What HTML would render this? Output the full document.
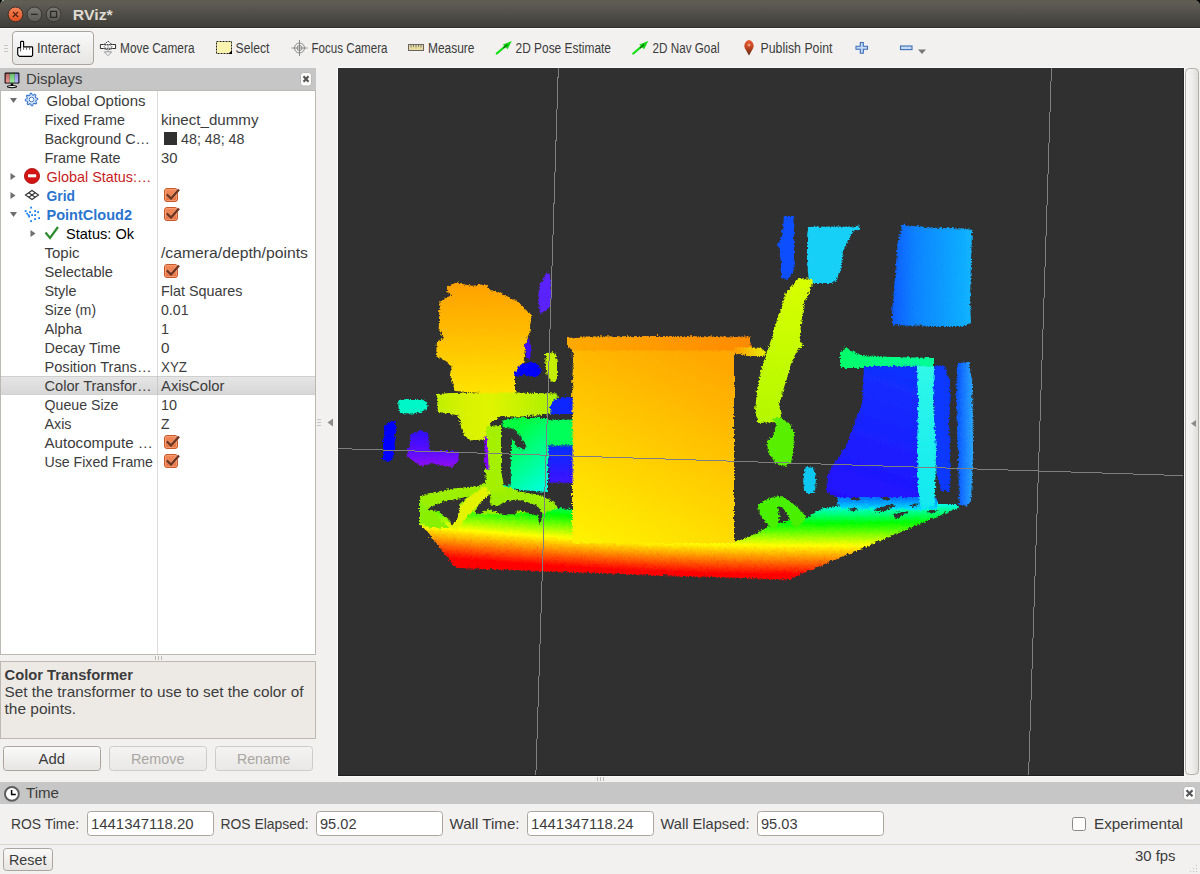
<!DOCTYPE html><html><head><meta charset="utf-8"><style>html,body{margin:0;padding:0;background:#f2f1f0;overflow:hidden}svg{display:block}text{font-family:"Liberation Sans",sans-serif;white-space:pre}</style></head><body>
<svg width="1200" height="874" viewBox="0 0 1200 874">
<defs>
<linearGradient id="tb" x1="0" y1="0" x2="0" y2="1"><stop offset="0" stop-color="#5b5950"/><stop offset="0.06" stop-color="#605e55"/><stop offset="1" stop-color="#3d3c38"/></linearGradient>
<linearGradient id="btn" x1="0" y1="0" x2="0" y2="1"><stop offset="0" stop-color="#fafafa"/><stop offset="1" stop-color="#e6e5e3"/></linearGradient>
<linearGradient id="btnd" x1="0" y1="0" x2="0" y2="1"><stop offset="0" stop-color="#f4f3f2"/><stop offset="1" stop-color="#e9e8e6"/></linearGradient>
<linearGradient id="cls" x1="0" y1="0" x2="0" y2="1"><stop offset="0" stop-color="#f6855a"/><stop offset="1" stop-color="#e0501e"/></linearGradient>
<linearGradient id="gbtn" x1="0" y1="0" x2="0" y2="1"><stop offset="0" stop-color="#7d7b74"/><stop offset="1" stop-color="#5a5953"/></linearGradient>
<linearGradient id="sel" x1="0" y1="0" x2="0" y2="1"><stop offset="0" stop-color="#e6e6e6"/><stop offset="1" stop-color="#d6d6d6"/></linearGradient>
<linearGradient id="chk" x1="0" y1="0" x2="0" y2="1"><stop offset="0" stop-color="#f38b5c"/><stop offset="1" stop-color="#e8703c"/></linearGradient>
<linearGradient id="vsplit" x1="0" y1="0" x2="1" y2="0"><stop offset="0" stop-color="#f6f5f4"/><stop offset="0.5" stop-color="#efeeed"/><stop offset="1" stop-color="#dddbd8"/></linearGradient>
<linearGradient id="mr" x1="0" y1="0" x2="0" y2="1"><stop offset="0" stop-color="#b86868"/><stop offset="1" stop-color="#f09898"/></linearGradient>
<linearGradient id="mg" x1="0" y1="0" x2="0" y2="1"><stop offset="0" stop-color="#6cba6c"/><stop offset="1" stop-color="#9aeaa0"/></linearGradient>
<linearGradient id="mb" x1="0" y1="0" x2="0" y2="1"><stop offset="0" stop-color="#8888d8"/><stop offset="1" stop-color="#b8b8ff"/></linearGradient>
<linearGradient id="pin" x1="0" y1="0" x2="0" y2="1"><stop offset="0" stop-color="#e85a30"/><stop offset="0.5" stop-color="#c04420"/><stop offset="1" stop-color="#5a2812"/></linearGradient>
</defs>
<rect x="0" y="0" width="1200" height="28" fill="url(#tb)"/>
<rect x="0" y="27" width="1200" height="1" fill="#2e2d29"/>
<path d="M0 0 H2.5 Q0.6 0.8 0 4 Z" fill="#000"/><path d="M1200 0 H1196 Q1199.2 1 1200 4 Z" fill="#000"/>
<rect x="2" y="0" width="2" height="1" fill="#a8d8e0" opacity="0.6"/>
<rect x="0" y="28" width="1200" height="1" fill="#fbfbfb"/>
<circle cx="15.5" cy="14.4" r="7.4" fill="url(#cls)" stroke="#3b2f28" stroke-width="1"/>
<path d="M12.9 11.8 L18.1 17 M18.1 11.8 L12.9 17" stroke="#4a1e10" stroke-width="1.1"/>
<circle cx="34.4" cy="14.4" r="7.4" fill="url(#gbtn)" stroke="#36352f" stroke-width="1"/>
<rect x="31" y="13.7" width="6.8" height="1.3" fill="#2c2b27"/>
<circle cx="53.6" cy="14.4" r="7.4" fill="url(#gbtn)" stroke="#36352f" stroke-width="1"/>
<rect x="50.6" y="11.4" width="6" height="6" fill="none" stroke="#2c2b27" stroke-width="1.3"/>
<text x="72.8" y="20.4" font-size="15" fill="#dfdbd2" font-weight="bold" textLength="40" lengthAdjust="spacingAndGlyphs">RViz*</text>
<rect x="0" y="29" width="1200" height="39" fill="#f2f1f0"/>
<rect x="4" y="45" width="4" height="1" fill="#c9c6c1"/>
<rect x="4" y="48" width="4" height="1" fill="#c9c6c1"/>
<rect x="4" y="51" width="4" height="1" fill="#c9c6c1"/>
<rect x="12.5" y="31.5" width="81" height="33" rx="3.5" fill="url(#btn)" stroke="#aaa59f" stroke-width="1"/>
<path d="M20.6 42.2 Q20.6 41.4 21.4 41.4 L22.8 41.4 Q23.6 41.4 23.6 42.2 L23.6 46.8 L31.9 46.8 Q32.6 46.8 32.6 47.5 L32.6 55.4 L31.6 56.4 L19.4 56.4 L17.7 54.7 L17.7 48.4 Q17.7 47.6 18.5 47.6 L20.6 47.6 Z" fill="#fff" stroke="#000" stroke-width="1.15" stroke-linejoin="round"/>
<path d="M20.6 48 V51.6 M23.6 47.2 V49.8 M26.6 47.2 V49.8 M29.6 47.2 V49.8" stroke="#333" stroke-width="0.8"/>
<text x="37" y="53" font-size="14" fill="#3c3c3c" textLength="43" lengthAdjust="spacingAndGlyphs">Interact</text>
<text x="120" y="53" font-size="14" fill="#3c3c3c" textLength="74.5" lengthAdjust="spacingAndGlyphs">Move Camera</text>
<text x="235.5" y="53" font-size="14" fill="#3c3c3c" textLength="34" lengthAdjust="spacingAndGlyphs">Select</text>
<text x="311.5" y="53" font-size="14" fill="#3c3c3c" textLength="76" lengthAdjust="spacingAndGlyphs">Focus Camera</text>
<text x="428" y="53" font-size="14" fill="#3c3c3c" textLength="46.5" lengthAdjust="spacingAndGlyphs">Measure</text>
<text x="652.5" y="53" font-size="14" fill="#3c3c3c" textLength="67" lengthAdjust="spacingAndGlyphs">2D Nav Goal</text>
<text x="760.5" y="53" font-size="14" fill="#3c3c3c" textLength="72" lengthAdjust="spacingAndGlyphs">Publish Point</text>
<text x="515.5" y="53" font-size="14" fill="#3c3c3c" textLength="95.5" lengthAdjust="spacingAndGlyphs">2D Pose Estimate</text>
<path d="M100.4 44.5 L103.6 44.5 Q108 42.6 112.4 44.5 L115.6 44.5 L115.6 48.5 L112.4 48.5 Q108 50.6 103.6 48.5 L100.4 48.5 Z" fill="#fff" stroke="#222" stroke-width="0.95"/>
<rect x="107.2" y="44" width="1.6" height="8.5" fill="#bdbdbd"/>
<ellipse cx="108" cy="46.6" rx="3.9" ry="1.9" fill="none" stroke="#333" stroke-width="0.9" stroke-dasharray="1.3 0.9"/>
<path d="M108 41.2 L111.9 44.6 L104.1 44.6 Z" fill="#fff" stroke="#222" stroke-width="0.9" stroke-dasharray="1.4 0.8"/>
<path d="M108 55.6 L104.4 51.9 L111.6 51.9 Z" fill="#fff" stroke="#8a8a8a" stroke-width="0.9"/>
<rect x="216.5" y="41.5" width="15" height="12" fill="#fbf3b0" stroke="#222" stroke-width="1" stroke-dasharray="2 1"/>
<path d="M228.2 54 L232 50.2 L232 54 Z" fill="#000"/>
<g fill="none" stroke="#8a8a8a" stroke-width="1"><circle cx="299.5" cy="48" r="5"/><circle cx="299.5" cy="48" r="2.5"/><path d="M291.5 48 H307.5 M299.5 40 V56"/></g>
<rect x="408.5" y="44.5" width="15" height="6" fill="#e6dca0" stroke="#666" stroke-width="1"/>
<path d="M411 45 V47.5 M413.5 45 V47 M416 45 V47.5 M418.5 45 V47 M421 45 V47.5" stroke="#666" stroke-width="0.8"/>
<path d="M496.8 53.5 L505 46.5" stroke="#12e012" stroke-width="2.3" stroke-linecap="round"/>
<path d="M511.8 41 L502.8 44.6 L507.6 49.2 Z" fill="#14d814"/>
<path d="M503.5 48 L507.5 44.5" stroke="#0a6a0a" stroke-width="1.2"/>
<path d="M633.3 53.5 L641.5 46.5" stroke="#12e012" stroke-width="2.3" stroke-linecap="round"/>
<path d="M648.3 41 L639.3 44.6 L644.1 49.2 Z" fill="#14d814"/>
<path d="M640.0 48 L644.0 44.5" stroke="#0a6a0a" stroke-width="1.2"/>
<path d="M749 55.5 L745 48.5 Q743.6 45.5 745 43 Q746.8 40 749 40 Q751.2 40 753 43 Q754.4 45.5 753 48.5 Z" fill="url(#pin)"/>
<circle cx="749" cy="45" r="1.5" fill="#f0b090" opacity="0.8"/>
<path d="M860.3 42.5 H863.3 V46.3 H867.5 V49.3 H863.3 V53.3 H860.3 V49.3 H856 V46.3 H860.3 Z" fill="#c4daf6" stroke="#3d6db5" stroke-width="1.1"/>
<rect x="900.5" y="46" width="11.5" height="3.6" fill="#c4daf6" stroke="#3d6db5" stroke-width="1.1"/>
<path d="M918 49.5 H926 L922 54 Z" fill="#777"/>
<rect x="0" y="68" width="316" height="22" fill="#c6c6c6"/>
<rect x="4.6" y="72.6" width="14.8" height="11" rx="1.2" fill="#000"/>
<rect x="5.6" y="73.6" width="4.2" height="9" fill="url(#mr)"/><rect x="9.8" y="73.6" width="5" height="9" fill="url(#mg)"/><rect x="14.8" y="73.6" width="3.6" height="9" fill="url(#mb)"/>
<rect x="10.8" y="83.5" width="2.4" height="2" fill="#000"/><ellipse cx="12" cy="86.6" rx="4.6" ry="1.1" fill="#fff" stroke="#000" stroke-width="1.1"/>
<text x="26" y="84" font-size="14.5" fill="#3c3c3c" textLength="56.5" lengthAdjust="spacingAndGlyphs">Displays</text>
<rect x="300.5" y="72.5" width="11" height="13.5" rx="3" fill="#fcfcfc" stroke="#bdb8b2" stroke-width="1"/>
<path d="M303.5 76.3 L308.5 81.8 M308.5 76.3 L303.5 81.8" stroke="#555" stroke-width="2.1"/>
<rect x="0.5" y="90.5" width="315" height="564" fill="#fff" stroke="#bcb8b2" stroke-width="1"/>
<rect x="157" y="91" width="1" height="563" fill="#dedcda"/>
<rect x="1" y="376" width="314" height="19" fill="url(#sel)"/>
<rect x="1" y="376" width="314" height="1" fill="#cfcfcf"/><rect x="1" y="394" width="314" height="1" fill="#d0d0d0"/>
<rect x="157" y="376" width="1" height="19" fill="#c8c8c8"/>
<text x="46.5" y="106" font-size="14.5" fill="#3c3c3c" textLength="99" lengthAdjust="spacingAndGlyphs">Global Options</text>
<text x="44.5" y="125" font-size="14.5" fill="#3c3c3c" textLength="80.5" lengthAdjust="spacingAndGlyphs">Fixed Frame</text>
<text x="161" y="125" font-size="14.5" fill="#3c3c3c" textLength="97.5" lengthAdjust="spacingAndGlyphs">kinect_dummy</text>
<text x="44.5" y="144" font-size="14.5" fill="#3c3c3c" textLength="105.5" lengthAdjust="spacingAndGlyphs">Background C…</text>
<text x="181" y="144" font-size="14.5" fill="#3c3c3c" textLength="63.5" lengthAdjust="spacingAndGlyphs">48; 48; 48</text>
<text x="44.5" y="163" font-size="14.5" fill="#3c3c3c" textLength="76" lengthAdjust="spacingAndGlyphs">Frame Rate</text>
<text x="161" y="163" font-size="14.5" fill="#3c3c3c" textLength="16.5" lengthAdjust="spacingAndGlyphs">30</text>
<text x="46.5" y="182" font-size="14.5" fill="#c61c1c" textLength="105" lengthAdjust="spacingAndGlyphs">Global Status:…</text>
<text x="46.5" y="201" font-size="14.5" fill="#2a75cf" font-weight="bold" textLength="28.5" lengthAdjust="spacingAndGlyphs">Grid</text>
<rect x="164.5" y="188.5" width="13" height="13" rx="2.5" fill="url(#chk)" stroke="#c8582a" stroke-width="1"/>
<rect x="165.5" y="189.5" width="11" height="11" rx="1.5" fill="none" stroke="#f6a27c" stroke-width="0.8"/>
<path d="M166.8 194.3 L171 198.5 L179 189.5" fill="none" stroke="#fde6da" stroke-width="3.6" opacity="0.35"/>
<path d="M166.8 194.3 L171 198.5 L179 189.5" fill="none" stroke="#6e3521" stroke-width="2.4"/>
<text x="46.5" y="220" font-size="14.5" fill="#2a75cf" font-weight="bold" textLength="85.5" lengthAdjust="spacingAndGlyphs">PointCloud2</text>
<rect x="164.5" y="207.5" width="13" height="13" rx="2.5" fill="url(#chk)" stroke="#c8582a" stroke-width="1"/>
<rect x="165.5" y="208.5" width="11" height="11" rx="1.5" fill="none" stroke="#f6a27c" stroke-width="0.8"/>
<path d="M166.8 213.3 L171 217.5 L179 208.5" fill="none" stroke="#fde6da" stroke-width="3.6" opacity="0.35"/>
<path d="M166.8 213.3 L171 217.5 L179 208.5" fill="none" stroke="#6e3521" stroke-width="2.4"/>
<text x="66" y="239" font-size="14.5" fill="#000000" textLength="68" lengthAdjust="spacingAndGlyphs">Status: Ok</text>
<text x="44.5" y="258" font-size="14.5" fill="#3c3c3c" textLength="35" lengthAdjust="spacingAndGlyphs">Topic</text>
<text x="161" y="258" font-size="14.5" fill="#3c3c3c" textLength="147" lengthAdjust="spacingAndGlyphs">/camera/depth/points</text>
<text x="44.5" y="277" font-size="14.5" fill="#3c3c3c" textLength="68.5" lengthAdjust="spacingAndGlyphs">Selectable</text>
<rect x="164.5" y="264.5" width="13" height="13" rx="2.5" fill="url(#chk)" stroke="#c8582a" stroke-width="1"/>
<rect x="165.5" y="265.5" width="11" height="11" rx="1.5" fill="none" stroke="#f6a27c" stroke-width="0.8"/>
<path d="M166.8 270.3 L171 274.5 L179 265.5" fill="none" stroke="#fde6da" stroke-width="3.6" opacity="0.35"/>
<path d="M166.8 270.3 L171 274.5 L179 265.5" fill="none" stroke="#6e3521" stroke-width="2.4"/>
<text x="44.5" y="296" font-size="14.5" fill="#3c3c3c" textLength="32" lengthAdjust="spacingAndGlyphs">Style</text>
<text x="161" y="296" font-size="14.5" fill="#3c3c3c" textLength="81.5" lengthAdjust="spacingAndGlyphs">Flat Squares</text>
<text x="44.5" y="315" font-size="14.5" fill="#3c3c3c" textLength="51.5" lengthAdjust="spacingAndGlyphs">Size (m)</text>
<text x="161" y="315" font-size="14.5" fill="#3c3c3c" textLength="27.5" lengthAdjust="spacingAndGlyphs">0.01</text>
<text x="44.5" y="334" font-size="14.5" fill="#3c3c3c" textLength="37.5" lengthAdjust="spacingAndGlyphs">Alpha</text>
<text x="161" y="334" font-size="14.5" fill="#3c3c3c" textLength="8" lengthAdjust="spacingAndGlyphs">1</text>
<text x="44.5" y="353" font-size="14.5" fill="#3c3c3c" textLength="76" lengthAdjust="spacingAndGlyphs">Decay Time</text>
<text x="161" y="353" font-size="14.5" fill="#3c3c3c" textLength="8.5" lengthAdjust="spacingAndGlyphs">0</text>
<text x="44.5" y="372" font-size="14.5" fill="#3c3c3c" textLength="107" lengthAdjust="spacingAndGlyphs">Position Trans…</text>
<text x="161" y="372" font-size="14.5" fill="#3c3c3c" textLength="26" lengthAdjust="spacingAndGlyphs">XYZ</text>
<text x="44.5" y="391" font-size="14.5" fill="#3c3c3c" textLength="107" lengthAdjust="spacingAndGlyphs">Color Transfor…</text>
<text x="161" y="391" font-size="14.5" fill="#3c3c3c" textLength="63.5" lengthAdjust="spacingAndGlyphs">AxisColor</text>
<text x="44.5" y="410" font-size="14.5" fill="#3c3c3c" textLength="74" lengthAdjust="spacingAndGlyphs">Queue Size</text>
<text x="161" y="410" font-size="14.5" fill="#3c3c3c" textLength="16" lengthAdjust="spacingAndGlyphs">10</text>
<text x="44.5" y="429" font-size="14.5" fill="#3c3c3c" textLength="27" lengthAdjust="spacingAndGlyphs">Axis</text>
<text x="161" y="429" font-size="14.5" fill="#3c3c3c" textLength="8.5" lengthAdjust="spacingAndGlyphs">Z</text>
<text x="44.5" y="448" font-size="14.5" fill="#3c3c3c" textLength="108.5" lengthAdjust="spacingAndGlyphs">Autocompute …</text>
<rect x="164.5" y="435.5" width="13" height="13" rx="2.5" fill="url(#chk)" stroke="#c8582a" stroke-width="1"/>
<rect x="165.5" y="436.5" width="11" height="11" rx="1.5" fill="none" stroke="#f6a27c" stroke-width="0.8"/>
<path d="M166.8 441.3 L171 445.5 L179 436.5" fill="none" stroke="#fde6da" stroke-width="3.6" opacity="0.35"/>
<path d="M166.8 441.3 L171 445.5 L179 436.5" fill="none" stroke="#6e3521" stroke-width="2.4"/>
<text x="44.5" y="467" font-size="14.5" fill="#3c3c3c" textLength="108.5" lengthAdjust="spacingAndGlyphs">Use Fixed Frame</text>
<rect x="164.5" y="454.5" width="13" height="13" rx="2.5" fill="url(#chk)" stroke="#c8582a" stroke-width="1"/>
<rect x="165.5" y="455.5" width="11" height="11" rx="1.5" fill="none" stroke="#f6a27c" stroke-width="0.8"/>
<path d="M166.8 460.3 L171 464.5 L179 455.5" fill="none" stroke="#fde6da" stroke-width="3.6" opacity="0.35"/>
<path d="M166.8 460.3 L171 464.5 L179 455.5" fill="none" stroke="#6e3521" stroke-width="2.4"/>
<rect x="164" y="132" width="13" height="13" fill="#303030"/>
<path d="M10.0 98.0 L17.0 98.0 L13.5 103.0 Z" fill="#6e6e6e"/>
<path d="M10.5 173.0 L15.5 176.5 L10.5 180.0 Z" fill="#6e6e6e"/>
<path d="M10.5 192.0 L15.5 195.5 L10.5 199.0 Z" fill="#6e6e6e"/>
<path d="M10.0 212.0 L17.0 212.0 L13.5 217.0 Z" fill="#6e6e6e"/>
<path d="M30.5 230.0 L35.5 233.5 L30.5 237.0 Z" fill="#6e6e6e"/>
<path d="M37.58 98.29 L37.70 99.50 L35.91 100.38 L35.66 101.22 L36.66 102.94 L35.88 103.88 L34.00 103.24 L33.22 103.66 L32.71 105.58 L31.50 105.70 L30.62 103.91 L29.78 103.66 L28.06 104.66 L27.12 103.88 L27.76 102.00 L27.34 101.22 L25.42 100.71 L25.30 99.50 L27.09 98.62 L27.34 97.78 L26.34 96.06 L27.12 95.12 L29.00 95.76 L29.78 95.34 L30.29 93.42 L31.50 93.30 L32.38 95.09 L33.22 95.34 L34.94 94.34 L35.88 95.12 L35.24 97.00 L35.66 97.78 Z" fill="#dfe8f6" stroke="#3a78cc" stroke-width="1.1" stroke-linejoin="round"/>
<circle cx="31.5" cy="99.5" r="2.3" fill="#fff" stroke="#3a78cc" stroke-width="1"/>
<circle cx="32" cy="176" r="7.6" fill="#d41414" stroke="#a80c0c" stroke-width="0.8"/>
<rect x="28" y="174.3" width="8.2" height="3" fill="#fff"/>
<g fill="none" stroke="#333" stroke-width="1.1"><path d="M25.5 195 L32 190.5 L38.5 195 L32 199.5 Z"/><path d="M28.75 192.75 L35.25 197.25 M35.25 192.75 L28.75 197.25"/></g>
<rect x="30.2" y="206.7" width="1.8" height="1.8" fill="#1a7fef"/>
<rect x="24.7" y="210.2" width="1.8" height="1.8" fill="#1a7fef"/>
<rect x="29.2" y="211.2" width="1.8" height="1.8" fill="#1a7fef"/>
<rect x="34.2" y="210.2" width="1.8" height="1.8" fill="#1a7fef"/>
<rect x="37.2" y="211.2" width="1.8" height="1.8" fill="#1a7fef"/>
<rect x="26.2" y="212.7" width="1.8" height="1.8" fill="#1a7fef"/>
<rect x="27.7" y="214.2" width="1.8" height="1.8" fill="#1a7fef"/>
<rect x="31.2" y="214.2" width="1.8" height="1.8" fill="#1a7fef"/>
<rect x="34.2" y="214.2" width="1.8" height="1.8" fill="#1a7fef"/>
<rect x="28.2" y="215.7" width="1.8" height="1.8" fill="#1a7fef"/>
<rect x="38.2" y="217.2" width="1.8" height="1.8" fill="#1a7fef"/>
<rect x="34.2" y="218.2" width="1.8" height="1.8" fill="#1a7fef"/>
<rect x="30.2" y="220.2" width="1.8" height="1.8" fill="#1a7fef"/>
<path d="M45.5 232.5 L50 238 L58 227" fill="none" stroke="#2d8a2d" stroke-width="2.2"/>
<rect x="155" y="656" width="1" height="4" fill="#bcb9b5"/>
<rect x="158" y="656" width="1" height="4" fill="#bcb9b5"/>
<rect x="161" y="656" width="1" height="4" fill="#bcb9b5"/>
<rect x="0.5" y="661.5" width="315" height="77" fill="#edeae6" stroke="#bcb8b2" stroke-width="1"/>
<text x="4.5" y="680" font-size="14.5" fill="#3c3c3c" font-weight="bold" textLength="128.5" lengthAdjust="spacingAndGlyphs">Color Transformer</text>
<text x="4.5" y="697" font-size="14.5" fill="#3c3c3c" textLength="299" lengthAdjust="spacingAndGlyphs">Set the transformer to use to set the color of</text>
<text x="4.5" y="714" font-size="14.5" fill="#3c3c3c" textLength="71.5" lengthAdjust="spacingAndGlyphs">the points.</text>
<rect x="3.5" y="746.5" width="97" height="24" rx="3" fill="url(#btn)" stroke="#a9a49e" stroke-width="1"/>
<text x="38.5" y="764" font-size="14.5" fill="#3c3c3c" textLength="26.5" lengthAdjust="spacingAndGlyphs">Add</text>
<rect x="109.5" y="746.5" width="97" height="24" rx="3" fill="url(#btnd)" stroke="#cfcbc6" stroke-width="1"/>
<text x="131.0" y="764" font-size="14.5" fill="#a9a6a2" textLength="53.5" lengthAdjust="spacingAndGlyphs">Remove</text>
<rect x="215.5" y="746.5" width="97" height="24" rx="3" fill="url(#btnd)" stroke="#cfcbc6" stroke-width="1"/>
<text x="237.0" y="764" font-size="14.5" fill="#a9a6a2" textLength="53.5" lengthAdjust="spacingAndGlyphs">Rename</text>
<rect x="317" y="419" width="4" height="1" fill="#c6c3bf"/>
<rect x="317" y="422" width="4" height="1" fill="#c6c3bf"/>
<rect x="317" y="425" width="4" height="1" fill="#c6c3bf"/>
<path d="M333 418.5 L333 426.5 L327.5 422.5 Z" fill="#8b8b8b"/>
<rect x="337" y="67" width="848" height="710" fill="#fbfbfb"/>
<rect x="338" y="68" width="846" height="708" fill="#303030"/>
<g><defs>
<radialGradient id="floor" gradientUnits="userSpaceOnUse" cx="823.6" cy="-3604.9" r="4200.0"><stop offset="0.97381" stop-color="#0020ff"/><stop offset="0.97810" stop-color="#00ffff"/><stop offset="0.98262" stop-color="#00ff00"/><stop offset="0.98795" stop-color="#ffff00"/><stop offset="0.99481" stop-color="#ff0000"/></radialGradient>
<linearGradient id="cab" gradientUnits="userSpaceOnUse" x1="690" y1="350" x2="600" y2="545"><stop offset="0" stop-color="#ffa800"/><stop offset="1" stop-color="#fff000"/></linearGradient>
<linearGradient id="lip" gradientUnits="userSpaceOnUse" x1="566" y1="0" x2="750" y2="0"><stop offset="0" stop-color="#ffaa00"/><stop offset="1" stop-color="#ff8a00"/></linearGradient>
<linearGradient id="chairb" gradientUnits="userSpaceOnUse" x1="0" y1="281" x2="0" y2="393"><stop offset="0" stop-color="#ffa000"/><stop offset="0.5" stop-color="#ffc000"/><stop offset="1" stop-color="#ffe400"/></linearGradient>
<linearGradient id="seat" gradientUnits="userSpaceOnUse" x1="435" y1="0" x2="557" y2="0"><stop offset="0" stop-color="#c0f000"/><stop offset="0.25" stop-color="#d8f200"/><stop offset="0.45" stop-color="#e0f400"/><stop offset="1" stop-color="#a8f000"/></linearGradient>
<linearGradient id="ring" gradientUnits="userSpaceOnUse" x1="0" y1="480" x2="0" y2="530"><stop offset="0" stop-color="#a0f000"/><stop offset="1" stop-color="#90f000"/></linearGradient>
<linearGradient id="gbox" gradientUnits="userSpaceOnUse" x1="510" y1="430" x2="550" y2="480"><stop offset="0" stop-color="#00ff40"/><stop offset="0.55" stop-color="#00ff90"/><stop offset="1" stop-color="#00ffd8"/></linearGradient>
<linearGradient id="purp" gradientUnits="userSpaceOnUse" x1="0" y1="430" x2="0" y2="466"><stop offset="0" stop-color="#3010ff"/><stop offset="0.6" stop-color="#6010ff"/><stop offset="1" stop-color="#9010f0"/></linearGradient>
<linearGradient id="bluer" gradientUnits="userSpaceOnUse" x1="891" y1="0" x2="971" y2="0"><stop offset="0" stop-color="#0a5cff"/><stop offset="0.3" stop-color="#0c84ff"/><stop offset="1" stop-color="#12b4ff"/></linearGradient>
<linearGradient id="ygs" gradientUnits="userSpaceOnUse" x1="0" y1="277" x2="0" y2="422"><stop offset="0" stop-color="#d8ff00"/><stop offset="1" stop-color="#b4f800"/></linearGradient>
<linearGradient id="bigb" gradientUnits="userSpaceOnUse" x1="870" y1="364" x2="830" y2="496"><stop offset="0" stop-color="#1030ff"/><stop offset="1" stop-color="#2410ff"/></linearGradient>
<linearGradient id="farr" gradientUnits="userSpaceOnUse" x1="955" y1="0" x2="972" y2="0"><stop offset="0" stop-color="#0850ff"/><stop offset="1" stop-color="#28a8ff"/></linearGradient>
<linearGradient id="gstrip" gradientUnits="userSpaceOnUse" x1="839" y1="0" x2="933" y2="0"><stop offset="0" stop-color="#00ff68"/><stop offset="1" stop-color="#00ff98"/></linearGradient>
<linearGradient id="ccyan" gradientUnits="userSpaceOnUse" x1="0" y1="365" x2="0" y2="509"><stop offset="0" stop-color="#30f8e8"/><stop offset="1" stop-color="#10e8f0"/></linearGradient>
<linearGradient id="bbox" gradientUnits="userSpaceOnUse" x1="0" y1="444" x2="0" y2="482"><stop offset="0" stop-color="#0030ff"/><stop offset="1" stop-color="#4010ff"/></linearGradient>
<linearGradient id="bcband" gradientUnits="userSpaceOnUse" x1="0" y1="494" x2="0" y2="508"><stop offset="0" stop-color="#0058ff"/><stop offset="1" stop-color="#00e0ff"/></linearGradient>
<linearGradient id="tail" gradientUnits="userSpaceOnUse" x1="733" y1="0" x2="765" y2="0"><stop offset="0" stop-color="#ff9a00"/><stop offset="1" stop-color="#e8f000"/></linearGradient>
<filter id="rough" x="-2%" y="-2%" width="104%" height="104%"><feTurbulence type="turbulence" baseFrequency="0.3" numOctaves="1" seed="3" result="t"/><feDisplacementMap in="SourceGraphic" in2="t" scale="3.5" xChannelSelector="R" yChannelSelector="G"/></filter>
</defs>
<g filter="url(#rough)">
<polygon points="418.0,500.0 430.0,494.0 460.0,490.0 500.0,492.0 547.0,500.0 556.0,507.0 571.0,508.0 571.0,541.0 733.0,541.0 756.0,532.0 770.0,523.0 806.0,517.0 820.0,507.5 835.0,505.0 870.0,503.0 935.0,503.0 956.0,503.0 958.0,506.0 787.0,578.5 700.0,575.5 583.0,571.5 458.0,567.0 453.0,565.0 426.0,530.0 418.0,523.0" fill="url(#floor)"/>
<polygon points="836.0,494.0 880.0,495.0 921.0,494.0 936.0,498.0 936.0,508.0 900.0,508.0 860.0,508.0 840.0,507.0 836.0,503.0" fill="url(#bcband)"/>
<polygon points="846.7,508.0 852.0,506.8 857.3,508.5 851.0,510.2" fill="#303030"/>
<polygon points="872.0,509.0 882.0,504.5 889.0,503.3 894.7,505.0 886.0,509.0 876.0,511.3" fill="#303030"/>
<polygon points="892.0,513.0 900.0,510.0 908.0,510.5 902.0,514.0 894.0,518.0" fill="#303030"/>
<polygon points="908.0,505.0 914.0,502.5 918.7,503.0 912.0,506.0" fill="#303030"/>
<polygon points="925.0,510.0 931.0,508.7 937.0,509.5 930.0,512.7" fill="#303030"/>
<polygon points="850.0,496.0 856.0,495.5 859.0,498.0 852.0,499.0" fill="#303030"/>
<polygon points="880.0,496.0 887.0,495.5 889.0,498.0 883.0,499.0" fill="#303030"/>
<polygon points="418.3,495.0 426.7,492.5 451.7,487.5 476.7,485.0 485.0,481.0 503.0,481.0 516.7,490.0 543.3,495.0 553.3,501.7 556.7,506.7 547.0,510.0 541.7,513.3 526.7,511.7 500.0,513.0 480.0,513.0 466.0,509.0 452.0,525.0 436.7,510.0 426.0,509.0 418.3,515.0" fill="url(#ring)"/>
<polygon points="418.3,500.0 426.0,507.0 436.0,511.0 440.0,520.0 450.0,527.0 430.0,527.0 418.3,523.0" fill="#88f000"/>
<polygon points="447.0,526.0 456.0,509.0 466.0,497.0 480.0,488.0 490.0,484.0 488.0,493.0 476.0,505.0 462.0,520.0 456.0,529.0" fill="#e4f400"/>
<polygon points="425.8,507.5 443.3,500.0 466.7,495.8 458.3,503.3 456.7,516.7 450.8,525.0 448.3,518.3 436.7,510.0 426.7,508.3" fill="#303030"/>
<polygon points="476.7,505.0 483.3,496.7 490.0,493.3 488.3,503.3 496.7,505.0 505.0,500.0 518.3,498.3 536.7,505.0 541.7,513.3 538.3,523.3 536.7,515.0 526.7,511.7 516.7,509.2 513.3,513.3 503.3,513.3 496.7,511.7 486.7,508.3 480.0,513.3 473.3,511.7" fill="#303030"/>
<polygon points="572.0,347.0 733.0,349.0 733.0,542.0 571.0,542.0 571.0,400.0" fill="url(#cab)"/>
<polygon points="566.0,337.0 580.0,335.5 650.0,335.0 749.0,335.5 750.0,347.0 733.0,349.5 572.0,349.5 566.0,345.0" fill="url(#lip)"/>
<polygon points="733.0,346.0 749.0,346.0 760.0,347.0 765.0,351.0 762.0,355.0 750.0,355.0 733.0,352.0" fill="url(#tail)"/>
<polygon points="446.0,286.0 455.7,281.3 460.8,283.0 471.0,284.7 485.0,283.0 489.0,289.0 498.6,290.8 505.5,295.0 515.8,299.3 522.6,306.2 530.4,314.8 528.6,330.2 524.4,342.3 522.6,361.0 514.0,371.4 514.0,392.0 493.5,392.9 454.0,390.0 448.8,375.0 450.5,364.6 435.0,354.3 436.0,340.5 442.8,337.0 437.7,328.5 438.5,301.0 443.7,297.6 450.5,293.3 446.2,290.8" fill="url(#chairb)"/>
<polygon points="435.5,393.0 449.0,392.0 514.0,391.5 556.0,392.5 557.0,398.0 557.0,412.0 540.0,414.0 520.0,415.5 500.0,415.0 490.0,421.0 485.0,438.0 471.0,439.5 463.0,435.0 460.0,425.0 457.5,414.5 450.0,413.0 437.0,411.0" fill="url(#seat)"/>
<polygon points="485.0,425.0 500.0,424.0 502.8,445.0 503.0,470.0 505.0,490.0 486.0,490.0 484.0,470.0 485.0,450.0" fill="#a4f000"/>
<polygon points="483.6,436.0 486.0,435.0 487.7,468.0 484.0,467.0" fill="#8000ff"/>
<polygon points="501.4,418.0 520.0,417.0 547.0,417.0 547.0,491.0 520.0,489.0 503.0,485.0" fill="url(#gbox)"/>
<polygon points="500.0,426.7 506.0,426.0 512.0,428.0 518.0,433.0 524.8,446.0 523.0,449.0 516.0,446.0 510.0,437.0 509.7,484.4 503.0,484.0 500.0,470.0" fill="#303030"/>
<polygon points="553.0,398.0 565.0,395.8 571.5,397.0 571.5,413.0 549.5,413.0 549.0,405.0" fill="#0828ff"/>
<polygon points="546.8,418.5 571.5,418.5 571.5,444.6 546.8,444.6" fill="#00ff58"/>
<polygon points="546.8,444.6 571.5,444.6 571.5,481.6 548.0,481.6" fill="url(#bbox)"/>
<polygon points="545.0,272.0 549.0,273.0 550.0,290.0 549.0,305.0 545.0,310.0 539.0,312.0 537.0,300.0 538.0,285.0" fill="#5a20ff"/>
<polygon points="518.0,364.0 530.0,361.0 538.0,364.0 540.0,372.0 535.0,376.0 525.0,374.0 513.0,375.0 515.0,369.0" fill="#0000ff"/>
<polygon points="527.0,337.0 530.0,345.0 529.0,358.0 525.0,357.0 524.0,345.0" fill="#4010ff"/>
<polygon points="545.0,352.0 554.0,351.0 556.0,360.0 556.0,378.0 552.0,381.0 546.0,375.0 544.0,365.0" fill="#c4f000"/>
<polygon points="397.0,399.0 405.0,398.0 420.0,398.0 426.0,401.0 427.0,407.0 420.0,411.0 410.0,412.5 398.0,412.0" fill="#00f8c8"/>
<polygon points="387.0,421.0 393.0,419.0 395.0,425.0 394.0,440.0 392.0,455.0 389.0,460.0 382.0,459.0 382.0,440.0 384.0,425.0" fill="#0000ff"/>
<polygon points="410.0,433.0 418.0,430.0 427.0,432.0 428.0,448.0 433.0,450.0 452.0,450.0 458.0,451.0 457.0,460.0 450.0,466.0 440.0,464.0 430.0,462.0 420.0,465.0 415.0,462.0 406.0,455.0 407.0,448.0 409.0,440.0" fill="url(#purp)"/>
<polygon points="901.0,223.5 911.0,225.0 940.0,227.0 968.0,227.5 971.0,230.0 970.0,260.0 969.0,300.0 970.0,322.0 960.0,325.0 930.0,325.0 891.0,324.0 891.0,312.0 892.0,299.0 895.0,262.0 897.0,240.0 900.0,230.0" fill="url(#bluer)"/>
<polygon points="807.0,226.0 830.0,225.5 852.0,225.5 857.0,224.0 859.0,227.0 851.0,231.0 845.0,243.0 842.0,250.0 840.0,265.0 837.0,274.0 835.0,279.0 830.0,282.0 808.0,282.0 806.0,260.0 806.0,237.0" fill="#14d0f8"/>
<polygon points="783.0,215.0 792.0,215.0 793.0,225.0 793.0,260.0 792.0,272.0 786.0,278.0 780.0,277.0 780.0,260.0 777.0,243.0 780.0,235.0 782.0,225.0" fill="#0a50ff"/>
<polygon points="797.0,277.0 812.0,278.0 809.0,290.0 803.0,301.0 798.0,340.0 803.0,343.5 797.0,348.0 791.0,360.0 785.0,380.0 778.0,403.0 780.0,415.0 777.0,421.0 757.0,422.0 754.0,410.0 756.0,389.0 760.0,369.0 772.0,333.0 777.0,315.0 785.0,291.0" fill="url(#ygs)"/>
<polygon points="771.0,417.0 780.0,417.0 788.0,422.0 793.0,430.0 792.0,450.0 790.0,462.0 784.0,465.0 774.0,462.0 767.0,450.0 766.0,440.0 771.0,436.0 775.0,425.0" fill="#58f000"/>
<polygon points="805.0,465.0 812.0,466.0 815.0,478.0 814.0,490.0 808.0,493.0 803.0,490.0 802.0,475.0" fill="#10c8f0"/>
<polygon points="839.0,352.0 845.0,346.0 850.0,350.0 860.0,354.0 890.0,356.0 933.0,357.0 933.0,367.0 880.0,367.0 845.0,367.0 839.0,366.0" fill="url(#gstrip)"/>
<polygon points="863.0,365.0 920.0,364.7 921.0,480.0 919.0,496.0 880.0,496.0 835.0,496.0 825.0,490.0 826.0,475.0 830.0,467.0 846.0,443.0 853.0,422.0 861.0,402.0 862.0,380.0" fill="url(#bigb)"/>
<polygon points="931.0,365.0 943.0,364.0 949.0,380.0 948.0,420.0 949.0,470.0 948.0,490.0 940.0,490.0 935.0,470.0 933.0,420.0" fill="#0838ff"/>
<polygon points="916.0,364.7 933.0,365.0 932.0,400.0 935.0,450.0 934.0,490.0 933.0,505.0 920.0,509.0 917.0,490.0 916.0,450.0 917.0,400.0" fill="url(#ccyan)"/>
<polygon points="956.0,362.0 968.0,361.0 971.0,380.0 972.0,450.0 970.0,500.0 966.0,505.0 958.0,503.0 957.0,450.0 955.0,400.0" fill="url(#farr)"/>
<polygon points="757.0,504.0 762.0,500.0 771.0,496.5 780.0,495.0 786.0,498.0 795.0,505.0 805.0,515.0 800.0,524.0 794.0,526.0 789.0,521.0 786.0,512.0 780.0,505.0 776.0,506.0 779.0,515.0 776.0,524.0 772.0,528.0 765.0,522.0 758.0,512.0" fill="#48f000"/>
</g>
<g stroke="#7f7f7f" stroke-width="1" shape-rendering="crispEdges" fill="none">
<path d="M558.314,68 L535.874,775"/>
<path d="M1051.45,68 L1028.59,775"/>
<path d="M338,448.552 L1184,475.64"/>
</g></g>
<rect x="338" y="775" width="846" height="1" fill="#1f1f1f"/><rect x="1183" y="68" width="1" height="708" fill="#282828"/>
<rect x="597" y="777" width="1" height="4" fill="#bcb9b4"/>
<rect x="600" y="777" width="1" height="4" fill="#bcb9b4"/>
<rect x="603" y="777" width="1" height="4" fill="#bcb9b4"/>
<rect x="1185.5" y="68.5" width="13" height="706" rx="4" fill="url(#vsplit)" stroke="#b3aea8" stroke-width="1"/>
<path d="M1196 420 L1196 427 L1191 423.5 Z" fill="#8b8b8b"/>
<rect x="0" y="782" width="1200" height="22" fill="#c6c6c6"/>
<circle cx="11.9" cy="793.9" r="6.9" fill="#fff" stroke="#5c5c5c" stroke-width="1.9"/>
<path d="M11.6 790 V794.4 H15.8" fill="none" stroke="#000" stroke-width="1.5"/>
<text x="26" y="798" font-size="14.5" fill="#3c3c3c" textLength="33" lengthAdjust="spacingAndGlyphs">Time</text>
<rect x="1183.5" y="786.5" width="12" height="13.5" rx="3" fill="#fcfcfc" stroke="#bdb8b2" stroke-width="1"/>
<path d="M1186.5 790.3 L1192.5 796.3 M1192.5 790.3 L1186.5 796.3" stroke="#555" stroke-width="2.1"/>
<text x="11" y="829" font-size="14.5" fill="#3c3c3c" textLength="68" lengthAdjust="spacingAndGlyphs">ROS Time:</text>
<rect x="87.5" y="811.5" width="126" height="24" rx="3" fill="#fff" stroke="#aaa59f" stroke-width="1"/>
<text x="220.5" y="829" font-size="14.5" fill="#3c3c3c" textLength="88" lengthAdjust="spacingAndGlyphs">ROS Elapsed:</text>
<rect x="316.5" y="811.5" width="126" height="24" rx="3" fill="#fff" stroke="#aaa59f" stroke-width="1"/>
<text x="449.5" y="829" font-size="14.5" fill="#3c3c3c" textLength="70" lengthAdjust="spacingAndGlyphs">Wall Time:</text>
<rect x="527.5" y="811.5" width="126" height="24" rx="3" fill="#fff" stroke="#aaa59f" stroke-width="1"/>
<text x="660.5" y="829" font-size="14.5" fill="#3c3c3c" textLength="89" lengthAdjust="spacingAndGlyphs">Wall Elapsed:</text>
<rect x="757.5" y="811.5" width="126" height="24" rx="3" fill="#fff" stroke="#aaa59f" stroke-width="1"/>
<text x="91.0" y="829" font-size="14.5" fill="#3c3c3c" textLength="102.5" lengthAdjust="spacingAndGlyphs">1441347118.20</text>
<text x="320.0" y="829" font-size="14.5" fill="#3c3c3c" textLength="36.5" lengthAdjust="spacingAndGlyphs">95.02</text>
<text x="531.0" y="829" font-size="14.5" fill="#3c3c3c" textLength="102.5" lengthAdjust="spacingAndGlyphs">1441347118.24</text>
<text x="761.0" y="829" font-size="14.5" fill="#3c3c3c" textLength="36.5" lengthAdjust="spacingAndGlyphs">95.03</text>
<rect x="1072.5" y="817.5" width="13" height="13" rx="2" fill="#fff" stroke="#8e8a85" stroke-width="1"/>
<text x="1094" y="829" font-size="14.5" fill="#3c3c3c" textLength="89" lengthAdjust="spacingAndGlyphs">Experimental</text>
<rect x="0" y="844" width="1200" height="1" fill="#d9d6d2"/>
<rect x="3.5" y="848.5" width="49" height="22" rx="3" fill="url(#btn)" stroke="#aaa59f" stroke-width="1"/>
<text x="9" y="865" font-size="14.5" fill="#3c3c3c" textLength="37.5" lengthAdjust="spacingAndGlyphs">Reset</text>
<text x="1135" y="861" font-size="14.5" fill="#3c3c3c" textLength="40.5" lengthAdjust="spacingAndGlyphs">30 fps</text>
<rect x="1196" y="871" width="1" height="1" fill="#c3c0bb"/>
<rect x="1193" y="871" width="1" height="1" fill="#c3c0bb"/>
<rect x="1190" y="871" width="1" height="1" fill="#c3c0bb"/>
<rect x="1196" y="868" width="1" height="1" fill="#c3c0bb"/>
<rect x="1193" y="868" width="1" height="1" fill="#c3c0bb"/>
<rect x="1196" y="865" width="1" height="1" fill="#c3c0bb"/>
</svg></body></html>
